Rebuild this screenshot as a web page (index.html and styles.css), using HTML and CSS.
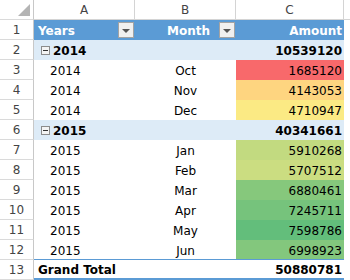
FILE: index.html
```html
<!DOCTYPE html>
<html>
<head>
<meta charset="utf-8">
<link rel="stylesheet" href="styles.css">
</head>
<body>
<div class="sheet">
  <div class="row colhdr">
    <div class="rh corner"><span class="tri"></span></div>
    <div class="c ca">A</div>
    <div class="c cb">B</div>
    <div class="c cc">C</div>
    <div class="rest"></div>
  </div>
  <div class="row">
    <div class="rh">1</div>
    <div class="c ca hdr hdr-a"><span>Years</span><span class="dd"><span class="arr"></span></span></div>
    <div class="c cb hdr hdr-b"><span>Month</span><span class="dd"><span class="arr"></span></span></div>
    <div class="c cc hdr num">Amount</div>
    <div class="rest"></div>
  </div>
  <div class="row">
    <div class="rh">2</div>
    <div class="c ca grp"><span class="mbox"></span><b>2014</b></div>
    <div class="c cb grp"></div>
    <div class="c cc grp num"><b>10539120</b></div>
    <div class="rest"></div>
  </div>
  <div class="row">
    <div class="rh">3</div>
    <div class="c ca yr">2014</div>
    <div class="c cb mo">Oct</div>
    <div class="c cc num" style="background:#f8696b">1685120</div>
    <div class="rest"></div>
  </div>
  <div class="row">
    <div class="rh">4</div>
    <div class="c ca yr">2014</div>
    <div class="c cb mo">Nov</div>
    <div class="c cc num" style="background:#fed580">4143053</div>
    <div class="rest"></div>
  </div>
  <div class="row">
    <div class="rh">5</div>
    <div class="c ca yr">2014</div>
    <div class="c cb mo">Dec</div>
    <div class="c cc num" style="background:#fbea84">4710947</div>
    <div class="rest"></div>
  </div>
  <div class="row">
    <div class="rh">6</div>
    <div class="c ca grp"><span class="mbox"></span><b>2015</b></div>
    <div class="c cb grp"></div>
    <div class="c cc grp num"><b>40341661</b></div>
    <div class="rest"></div>
  </div>
  <div class="row">
    <div class="rh">7</div>
    <div class="c ca yr">2015</div>
    <div class="c cb mo">Jan</div>
    <div class="c cc num" style="background:#c2da80">5910268</div>
    <div class="rest"></div>
  </div>
  <div class="row">
    <div class="rh">8</div>
    <div class="c ca yr">2015</div>
    <div class="c cb mo">Feb</div>
    <div class="c cc num" style="background:#cbdd81">5707512</div>
    <div class="rest"></div>
  </div>
  <div class="row">
    <div class="rh">9</div>
    <div class="c ca yr">2015</div>
    <div class="c cb mo">Mar</div>
    <div class="c cc num" style="background:#86c87c">6880461</div>
    <div class="rest"></div>
  </div>
  <div class="row">
    <div class="rh">10</div>
    <div class="c ca yr">2015</div>
    <div class="c cb mo">Apr</div>
    <div class="c cc num" style="background:#76c37c">7245711</div>
    <div class="rest"></div>
  </div>
  <div class="row">
    <div class="rh">11</div>
    <div class="c ca yr">2015</div>
    <div class="c cb mo">May</div>
    <div class="c cc num" style="background:#63be7b">7598786</div>
    <div class="rest"></div>
  </div>
  <div class="row">
    <div class="rh">12</div>
    <div class="c ca yr">2015</div>
    <div class="c cb mo">Jun</div>
    <div class="c cc num" style="background:#83c77d">6998923</div>
    <div class="rest"></div>
  </div>
  <div class="row">
    <div class="rh">13</div>
    <div class="c ca tot"><b>Grand Total</b></div>
    <div class="c cb tot"></div>
    <div class="c cc tot num"><b>50880781</b></div>
    <div class="rest"></div>
  </div>
</div>
</body>
</html>
```

FILE: styles.css
```css
html, body {
  margin: 0;
  padding: 0;
  background: #fff;
}
body {
  font-family: "DejaVu Sans", Verdana, sans-serif;
  font-size: 12px;
  color: #000;
}
.sheet {
  width: 350px;
  height: 280px;
  overflow: hidden;
}
.row {
  display: flex;
  height: 20px;
}
.rh {
  width: 34px;
  flex: none;
  box-sizing: border-box;
  border-right: 1px solid #c8c8c8;
  border-bottom: 1px solid #dadada;
  color: #444;
  display: flex;
  align-items: center;
  justify-content: center;
  padding-top: 1px;
}
.corner {
  position: relative;
}
.tri {
  position: absolute;
  left: 18px;
  top: 4px;
  width: 0;
  height: 0;
  border-left: 12px solid transparent;
  border-bottom: 12px solid #b4b4b4;
}
.c {
  flex: none;
  box-sizing: border-box;
  display: flex;
  align-items: center;
  padding-top: 1px;
  white-space: nowrap;
}
.ca { width: 101px; }
.cb { width: 101px; }
.cc { width: 108px; }
.rest { flex: 1; }

.colhdr .c,
.colhdr .rest {
  justify-content: center;
  color: #444;
  border-bottom: 1px solid #d4d4d4;
}
.colhdr .c {
  border-right: 1px solid #d4d4d4;
}

.hdr {
  background: #5b9bd5;
  color: #fff;
  font-weight: bold;
}
.hdr-a {
  justify-content: space-between;
  padding-left: 4px;
  padding-right: 1px;
}
.hdr-b {
  justify-content: flex-end;
  gap: 9px;
  padding-right: 1px;
}
.dd {
  width: 16px;
  height: 16px;
  box-sizing: border-box;
  border: 1px solid #a3a3a3;
  background: #f0f0f0;
  display: flex;
  align-items: center;
  justify-content: center;
  margin-top: -1px;
}
.arr {
  width: 0;
  height: 0;
  border-left: 4px solid transparent;
  border-right: 4px solid transparent;
  border-top: 4px solid #555;
  margin-top: 1px;
}
.num {
  justify-content: flex-end;
  padding-right: 2px;
}
.grp {
  background: #ddebf7;
}
.ca.grp {
  padding-left: 7px;
}
.mbox {
  width: 9px;
  height: 9px;
  box-sizing: border-box;
  border: 1px solid #8c8c8c;
  background: #f4f4f4;
  margin-right: 3px;
  position: relative;
}
.mbox::after {
  content: "";
  position: absolute;
  left: 1px;
  right: 1px;
  top: 3px;
  height: 1px;
  background: #333;
}
.yr {
  padding-left: 16px;
}
.mo {
  justify-content: center;
}
.tot {
  border-top: 1px solid #5b9bd5;
  border-bottom: 2px solid #5b9bd5;
  margin-top: -1px;
  height: 21px;
}
.ca.tot {
  padding-left: 4px;
}
```
